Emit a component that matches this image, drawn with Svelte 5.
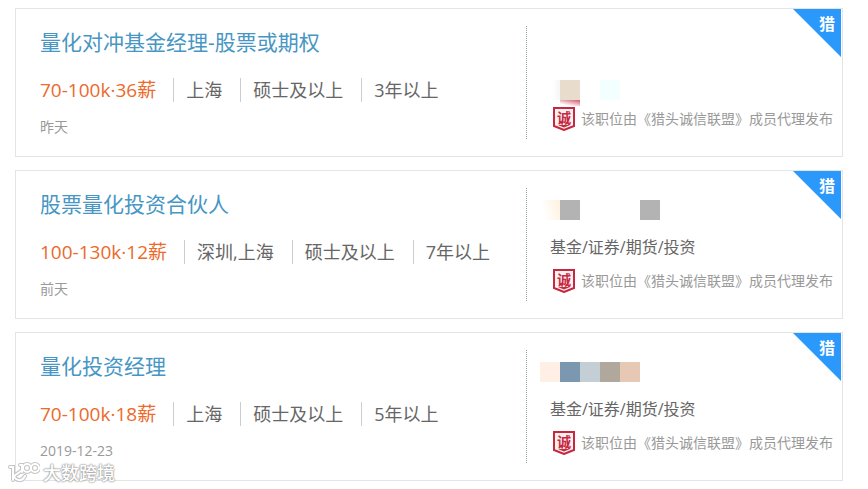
<script>
    const jobs = [
        {
            title: '量化对冲基金经理-股票或期权',
            salary: '70-100k·36薪',
            tags: ['上海', '硕士及以上', '3年以上'],
            date: '昨天',
            company: [],
            industry: '',
            blocks: ['smudge', 'sand', '', 'ice'],
        },
        {
            title: '股票量化投资合伙人',
            salary: '100-130k·12薪',
            tags: ['深圳,上海', '硕士及以上', '7年以上'],
            date: '前天',
            company: ['cream', 'gray', '', '', '', 'gray'],
            industry: '基金/证券/期货/投资',
            blocks: [],
        },
        {
            title: '量化投资经理',
            salary: '70-100k·18薪',
            tags: ['上海', '硕士及以上', '5年以上'],
            date: '2019-12-23',
            company: ['peach', 'steel', 'mist', 'taupe', 'rose'],
            industry: '基金/证券/期货/投资',
            blocks: [],
        },
    ];
</script>

<main class="page">
    <ul class="jobs">
        {#each jobs as job}
            <li class="card">
                <div class="info">
                    <h3 class="title"><a href="#job">{job.title}</a></h3>
                    <p class="tags">
                        <span class="salary">{job.salary}</span>
                        {#each job.tags as tag}
                            <span class="tag">{tag}</span>
                        {/each}
                    </p>
                    <time class="date">{job.date}</time>
                </div>

                <div class="company">
                    <div class="mosaic">
                        {#each job.company as tone}
                            <span class="block {tone}"></span>
                        {/each}
                    </div>
                    {#if job.industry}
                        <p class="industry">{job.industry}</p>
                    {:else}
                        <div class="mosaic industry-mosaic">
                            {#each job.blocks as tone}
                                <span class="block {tone}"></span>
                            {/each}
                        </div>
                    {/if}
                    <p class="alliance">
                        <svg class="shield" viewBox="0 0 22 24" aria-hidden="true">
                            <path d="M1 1H21V19L11 23L1 19Z" fill="#fdeef0" stroke="#c4293f" stroke-width="2" />
                            <path d="M5 18L11 20.500L17 18Z" fill="#c4293f" />
                            <text x="11" y="16" text-anchor="middle">诚</text>
                        </svg>
                        <span>该职位由《猎头诚信联盟》成员代理发布</span>
                    </p>
                </div>

                <span class="corner">猎</span>
            </li>
        {/each}
    </ul>

    <div class="watermark">
        <svg viewBox="0 0 32 22" aria-hidden="true">
            <g class="halo">
                <path d="M2 5H5V18M13 9L6 14C8 19 14 20 17 14" />
                <path d="M12 3H14V10" />
                <circle cx="19" cy="6" r="4" />
                <circle cx="27" cy="6" r="4" />
            </g>
            <g class="line">
                <path d="M2 5H5V18M13 9L6 14C8 19 14 20 17 14" />
                <path d="M12 3H14V10" />
                <circle cx="19" cy="6" r="4" />
                <circle cx="27" cy="6" r="4" />
            </g>
        </svg>
        <span>大数跨境</span>
    </div>
</main>

<style>
    :global(body) {
        margin: 0;
        background: #fff;
    }
    .page {
        position: relative;
        padding: 8px 25px 8px 15px;
        font-family: "Open Sans", "Noto Sans CJK SC", sans-serif;
        color: #666;
    }
    .jobs {
        display: flex;
        flex-direction: column;
        gap: 13px;
        margin: 0;
        padding: 0;
        list-style: none;
    }
    h3,
    p {
        margin: 0;
        font-weight: 400;
    }
    .card {
        position: relative;
        display: flex;
        border: 1px solid #e3e4e5;
        padding: 17px 0;
    }
    .info {
        flex: 1;
        min-width: 0;
        padding-left: 24px;
    }
    .title {
        font-size: 21px;
        line-height: 32px;
    }
    .title a {
        color: #4796c4;
        text-decoration: none;
    }
    .tags {
        display: flex;
        align-items: center;
        padding-top: 20px;
        font-size: 18px;
        line-height: 24px;
        white-space: nowrap;
    }
    .salary {
        padding-right: 17px;
        font-size: 19px;
        color: #ec6a2b;
    }
    .tag {
        padding: 0 18px 0 12px;
        border-left: 1px solid #ccc;
    }
    .date {
        display: block;
        padding: 15px 0 2px;
        font-size: 14px;
        line-height: 20px;
        color: #999;
    }
    .company {
        width: 316px;
        flex-shrink: 0;
        box-sizing: border-box;
        border-left: 1px dotted #8fa3a3;
    }
    .mosaic {
        display: flex;
        height: 20px;
        padding: 12px 0 0 13px;
    }
    .block {
        width: 20px;
        height: 20px;
    }
    .industry {
        padding: 15px 0 0 23px;
        font-size: 16px;
        line-height: 24px;
    }
    .industry-mosaic {
        padding-top: 22px;
        margin-bottom: -3px;
    }
    .alliance {
        display: flex;
        align-items: center;
        gap: 6px;
        padding: 10px 0 0 26px;
        font-size: 14px;
        line-height: 24px;
        color: #999;
        white-space: nowrap;
    }
    .shield {
        width: 22px;
        height: 24px;
        flex-shrink: 0;
    }
    .shield text {
        font-size: 14px;
        font-weight: 700;
        fill: #c4293f;
    }
    .corner {
        position: absolute;
        top: 0;
        right: 1px;
        width: 48px;
        height: 48px;
        box-sizing: border-box;
        padding: 3px 6px 0 0;
        background: #2b98fc;
        clip-path: polygon(0 0, 100% 0, 100% 100%);
        font-size: 16px;
        font-weight: 700;
        line-height: 24px;
        text-align: right;
        color: #fff;
    }

    .sand {
        position: relative;
        background: #e8dccd;
    }
    .sand::after {
        content: "";
        position: absolute;
        top: 20px;
        left: 0;
        width: 20px;
        height: 6px;
        background: linear-gradient(12deg, #fff 20%, #d96b7f 90%);
    }
    .smudge {
        background: linear-gradient(90deg, #fff 60%, #f6f6f6);
    }
    .ice {
        background: #f3ffff;
    }
    .cream {
        background: linear-gradient(75deg, #fff 20%, #fff1de);
    }
    .gray {
        background: #b3b3b3;
    }
    .peach {
        background: #ffefe5;
    }
    .steel {
        background: #7c98b0;
    }
    .mist {
        background: #c3ced5;
    }
    .taupe {
        background: #b0a79d;
    }
    .rose {
        background: #e6c8b4;
    }

    .watermark {
        position: absolute;
        left: 8px;
        bottom: 4px;
        display: flex;
        align-items: center;
        gap: 3px;
        font-size: 18px;
        font-weight: 500;
        line-height: 24px;
        color: #fff;
        text-shadow: 0 0 2px #999, 0 0 2px #999, 0 0 1px #aaa;
    }
    .watermark svg {
        width: 32px;
        height: 22px;
    }
    .halo,
    .line {
        fill: none;
        stroke-linecap: round;
    }
    .halo {
        stroke: #c4c4c4;
        stroke-width: 4;
    }
    .line {
        stroke: #fff;
        stroke-width: 2;
    }
</style>
